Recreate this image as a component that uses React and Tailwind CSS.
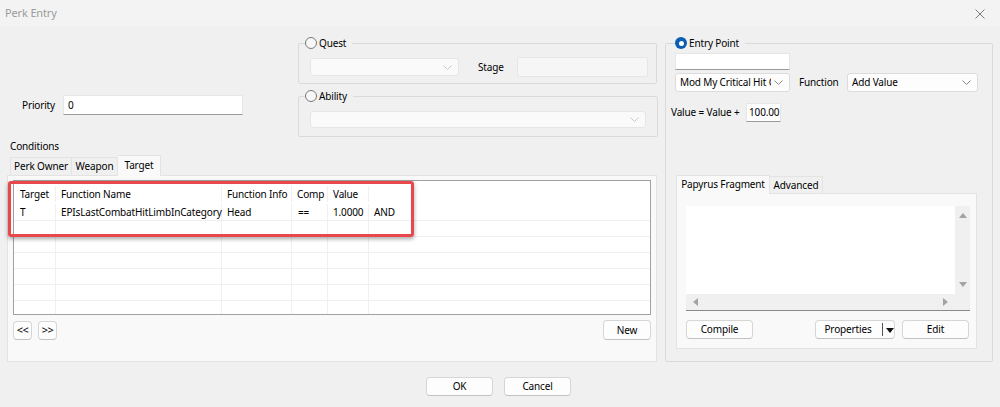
import React from 'react';

const font = "font-['Noto_Sans','DejaVu_Sans',sans-serif]";

function Chevron({ className = '' }) {
  return (
    <svg width="9" height="5" viewBox="0 0 9 5" className={className}>
      <path d="M0.5 0.5 L4.5 4.5 L8.5 0.5" fill="none" stroke="currentColor" strokeWidth="1" />
    </svg>
  );
}

function Radio({ checked }) {
  if (checked) {
    return (
      <span className="w-[12px] h-[12px] rounded-full bg-[#0a5fb4] flex items-center justify-center shrink-0">
        <span className="w-[5px] h-[5px] rounded-full bg-white" />
      </span>
    );
  }
  return <span className="w-[12px] h-[12px] rounded-full border border-[#7a7a7a] bg-[#f7f7f7] shrink-0" />;
}

function Combo({ value = '', className = '', disabled = false }) {
  return (
    <div
      className={`flex items-center justify-between overflow-hidden rounded-[3px] border ${
        disabled ? 'border-[#e6e6e6] bg-[#fafafa] text-[#c8c8c8]' : 'border-[#dcdcdc] bg-[#fdfdfd] text-[#8a8a8a]'
      } ${className}`}
    >
      <span className="pl-[4px] text-black whitespace-nowrap overflow-hidden">{value}</span>
      <Chevron className="shrink-0 ml-[3px] mr-[6px]" />
    </div>
  );
}

function Button({ children, className = '' }) {
  return (
    <div
      className={`flex items-center justify-center rounded-[4px] border border-[#d6d6d6] border-b-[#c2c2c2] bg-[#fdfdfd] text-black ${className}`}
    >
      {children}
    </div>
  );
}

function Tri({ dir }) {
  const pts = {
    up: '0,6 4,1 8,6',
    down: '0,1 4,6 8,1',
    left: '6,0 1,4 6,8',
    right: '1,0 6,4 1,8',
  }[dir];
  const vertical = dir === 'up' || dir === 'down';
  return (
    <svg width={vertical ? 8 : 7} height={vertical ? 7 : 8} viewBox={vertical ? '0 0 8 7' : '0 0 7 8'}>
      <polygon points={pts} fill="#a3a3a3" />
    </svg>
  );
}

const cols = 'grid grid-cols-[42px_166px_70px_36px_41px_1fr]';
const cell = 'border-r border-[#f0f0f0] flex items-center pl-[5px] whitespace-nowrap';

function Row({ cells, header }) {
  return (
    <div className={`${cols} ${header ? 'h-[21px] pt-[5px]' : 'h-[16px] border-b border-[#f0f0f0]'}`}>
      {cells.map((c, i) => (
        <div key={i} className={`${cell} ${i === 0 ? 'pl-[6px]' : ''} ${i === 5 ? 'border-r-0' : ''}`}>
          {c}
        </div>
      ))}
    </div>
  );
}

export default function App() {
  const empty = ['', '', '', '', '', ''];
  return (
    <div className={`w-[1000px] h-[407px] bg-[#f0f0f0] text-[10px] tracking-[-0.15px] text-black ${font} flex flex-col overflow-hidden`}>
      {/* Title bar */}
      <div className="h-[27px] shrink-0 bg-[#f3f3f3] flex items-center justify-between pl-[5px] pr-[15px]">
        <span className="text-[11px] text-[#9b9b9b]">Perk Entry</span>
        <svg width="10" height="10" viewBox="0 0 10 10">
          <path d="M0.5 0.5 L9.5 9.5 M9.5 0.5 L0.5 9.5" stroke="#7a7a7a" strokeWidth="1" />
        </svg>
      </div>

      {/* Main */}
      <div className="flex h-[335px] shrink-0">
        {/* Left column */}
        <div className="w-[665px] shrink-0 flex flex-col">
          <div className="flex">
            <div className="w-[298px] shrink-0 pt-[68px]">
              <div className="flex items-center">
                <span className="ml-[22px] w-[41px]">Priority</span>
                <div className="w-[180px] h-[20px] bg-white border border-[#e6e6e6] border-b-[#9a9a9a] flex items-center pl-[4px]">
                  0
                </div>
              </div>
            </div>
            <div className="w-[359px] shrink-0 pt-[9px]">
              <fieldset className="border border-[#dadada] rounded-[2px] px-[11px] pr-[8px] pt-[7px] pb-[6px]">
                <legend className="ml-[-5px] pr-[6px] h-[14px] flex items-center gap-[2px]">
                  <Radio />
                  <span>Quest</span>
                </legend>
                <div className="flex items-center h-[20px]">
                  <Combo disabled className="w-[149px] h-[18px]" />
                  <span className="ml-[19px] w-[39px]">Stage</span>
                  <div className="w-[131px] h-[20px] bg-[#f6f6f6] border border-[#e6e6e6] rounded-[2px]" />
                </div>
              </fieldset>
              <fieldset className="mt-[5px] border border-[#dadada] rounded-[2px] px-[11px] pt-[8px] pb-[8px]">
                <legend className="ml-[-5px] pr-[6px] h-[14px] flex items-center gap-[2px]">
                  <Radio />
                  <span>Ability</span>
                </legend>
                <Combo disabled className="w-[336px] h-[17px]" />
              </fieldset>
            </div>
          </div>

          <div className="ml-[10px] mt-[2px] h-[14px] flex items-center">Conditions</div>

          {/* Conditions tabs */}
          <div className="ml-[10px] mt-[4px] h-[18px] flex items-end relative z-10">
            <div className="w-[62px] h-[18px] border border-b-0 border-[#e3e3e3] flex items-center justify-center">Perk Owner</div>
            <div className="w-[46px] h-[18px] border border-b-0 border-l-0 border-[#e3e3e3] flex items-center justify-center">Weapon</div>
            <div className="w-[43px] h-[21px] mb-[-1px] bg-[#f9f9f9] border border-b-0 border-l-0 border-[#e3e3e3] flex items-center justify-center pb-[2px]">
              Target
            </div>
          </div>
          <div className="relative ml-[7px] w-[650px] h-[187px] bg-[#f9f9f9] border border-[#e3e3e3] px-[5px] pt-[4px]">
            <div className="w-[638px] h-[135px] bg-white border border-[#a0a0a0] overflow-hidden">
              <Row header cells={['Target', 'Function Name', 'Function Info', 'Comp', 'Value', '']} />
              <div className={`${cols} h-[19px] pt-[2px] border-b border-[#f0f0f0]`}>
                {['T', 'EPIsLastCombatHitLimbInCategory', 'Head', '==', '1.0000', 'AND'].map((c, i) => (
                  <div key={i} className={`${cell} ${i === 0 ? 'pl-[6px]' : ''} ${i === 3 ? 'pl-[6px]' : ''} ${i === 5 ? 'border-r-0' : ''}`}>
                    {c}
                  </div>
                ))}
              </div>
              {[0, 1, 2, 3, 4, 5].map((r) => (
                <Row key={r} cells={empty} />
              ))}
            </div>
            <div className="flex items-center mt-[5px]">
              <Button className="w-[19px] h-[19px] text-[11px] text-[#4a5a8a] tracking-[-0.5px]">&lt;&lt;</Button>
              <Button className="w-[19px] h-[19px] ml-[6px] text-[11px] text-[#4a5a8a] tracking-[-0.5px]">&gt;&gt;</Button>
              <Button className="w-[48px] h-[20px] ml-auto">New</Button>
            </div>

            {/* Highlight annotation */}
            <div className="absolute left-[0px] top-[5px] w-[406px] h-[56px] border-[3px] border-[#e8474c] rounded-[3px] shadow-[0_2px_4px_rgba(0,0,0,0.35)]" />
          </div>
        </div>

        {/* Entry point group */}
        <div className="w-[328px] shrink-0 pt-[9px]">
          <fieldset className="border border-[#dadada] rounded-[2px] pl-[9px] pb-[12px]">
            <legend className="ml-[0px] pr-[6px] h-[14px] flex items-center gap-[2px]">
              <Radio checked />
              <span>Entry Point</span>
            </legend>
            <div className="mt-[3px] w-[115px] h-[17px] bg-white border border-[#e6e6e6] border-b-[#9a9a9a]" />
            <div className="mt-[3px] flex items-center h-[19px]">
              <Combo value="Mod My Critical Hit Ch" className="w-[115px] h-[19px]" />
              <span className="ml-[9px] w-[48px]">Function</span>
              <Combo value="Add Value" className="w-[131px] h-[19px]" />
            </div>
            <div className="mt-[11px] ml-[-4px] flex items-center h-[19px]">
              <span className="w-[75px] whitespace-nowrap">Value = Value +</span>
              <div className="w-[35px] h-[19px] bg-white border border-[#e6e6e6] border-b-[#9a9a9a] overflow-hidden flex items-center pl-[2px] whitespace-nowrap">
                100.00
              </div>
            </div>

            {/* Papyrus tabs */}
            <div className="mt-[54px] ml-[1px] h-[17px] flex items-end relative z-10">
              <div className="w-[94px] h-[19px] mb-[-1px] bg-[#f9f9f9] border border-b-0 border-[#e3e3e3] flex items-center justify-center pb-[2px]">
                Papyrus Fragment
              </div>
              <div className="w-[53px] h-[17px] border border-b-0 border-l-0 border-[#e3e3e3] flex items-center justify-center">Advanced</div>
            </div>
            <div className="ml-[1px] w-[301px] h-[156px] bg-[#f9f9f9] border border-[#e3e3e3] pl-[9px] pr-[7px] pt-[12px]">
              <div className="w-[284px] h-[105px] flex flex-col border-b border-[#8a8a8a]">
                <div className="flex flex-1">
                  <div className="flex-1 bg-white" />
                  <div className="w-[15px] bg-[#f0f0f0] flex flex-col items-center justify-between py-[6px]">
                    <Tri dir="up" />
                    <Tri dir="down" />
                  </div>
                </div>
                <div className="h-[16px] bg-[#f0f0f0] flex items-center justify-between pl-[6px] pr-[21px]">
                  <Tri dir="left" />
                  <Tri dir="right" />
                </div>
              </div>
              <div className="mt-[9px] flex items-center">
                <Button className="w-[67px] h-[19px]">Compile</Button>
                <Button className="ml-[62px] w-[80px] h-[19px] relative">
                  <span className="mr-[14px]">Properties</span>
                  <span className="absolute left-[66px] top-[2px] h-[13px] border-l border-[#555]" />
                  <svg width="8" height="5" viewBox="0 0 8 5" className="absolute left-[70px] top-[7px]">
                    <polygon points="0,0 8,0 4,5" fill="#111" />
                  </svg>
                </Button>
                <Button className="ml-[7px] w-[67px] h-[19px]">Edit</Button>
              </div>
            </div>
          </fieldset>
        </div>
      </div>

      {/* Footer */}
      <div className="mt-[15px] flex justify-center gap-[11px] pr-[3px]">
        <Button className="w-[67px] h-[19px]">OK</Button>
        <Button className="w-[67px] h-[19px]">Cancel</Button>
      </div>
    </div>
  );
}
